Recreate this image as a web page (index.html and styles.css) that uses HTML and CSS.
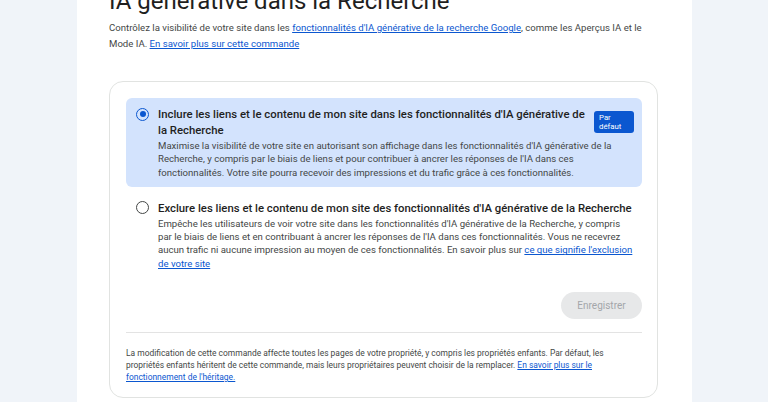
FILE: index.html
```html
<!DOCTYPE html>
<html lang="fr">
<head>
<meta charset="utf-8">
<title>IA générative dans la Recherche</title>
<link rel="stylesheet" href="styles.css">
</head>
<body>
<main class="page">
  <h1 class="title">IA générative dans la Recherche</h1>
  <p class="intro">Contrôlez la visibilité de votre site dans les <a href="#">fonctionnalités d'IA générative de la recherche Google</a>, comme les Aperçus IA et le Mode IA. <a href="#">En savoir plus sur cette commande</a></p>

  <section class="card">
    <div class="option selected">
      <span class="radio on"></span>
      <div class="opt-body">
        <div class="opt-head">
          <div class="opt-title">Inclure les liens et le contenu de mon site dans les fonctionnalités d'IA générative de la Recherche</div>
          <span class="badge">Par<br>défaut</span>
        </div>
        <p class="opt-desc">Maximise la visibilité de votre site en autorisant son affichage dans les fonctionnalités d'IA générative de la Recherche, y compris par le biais de liens et pour contribuer à ancrer les réponses de l'IA dans ces fonctionnalités. Votre site pourra recevoir des impressions et du trafic grâce à ces fonctionnalités.</p>
      </div>
    </div>

    <div class="option">
      <span class="radio"></span>
      <div class="opt-body">
        <div class="opt-title">Exclure les liens et le contenu de mon site des fonctionnalités d'IA générative de la Recherche</div>
        <p class="opt-desc">Empêche les utilisateurs de voir votre site dans les fonctionnalités d'IA générative de la Recherche, y compris par le biais de liens et en contribuant à ancrer les réponses de l'IA dans ces fonctionnalités. Vous ne recevrez aucun trafic ni aucune impression au moyen de ces fonctionnalités. En savoir plus sur <a href="#">ce que signifie l'exclusion de votre site</a></p>
      </div>
    </div>

    <div class="actions">
      <button class="save" type="button" disabled>Enregistrer</button>
    </div>

    <hr class="divider">

    <p class="footnote">La modification de cette commande affecte toutes les pages de votre propriété, y compris les propriétés enfants. Par défaut, les propriétés enfants héritent de cette commande, mais leurs propriétaires peuvent choisir de la remplacer. <a href="#">En savoir plus sur le fonctionnement de l'héritage.</a></p>
  </section>
</main>
</body>
</html>
```

FILE: styles.css
```css
html, body {
  margin: 0;
  padding: 0;
  background: #f0f4f9;
  font-family: Roboto, "Liberation Sans", Arial, sans-serif;
  color: #1f1f1f;
}

.page {
  width: 615px;
  margin-left: 77px;
  background: #ffffff;
  padding: 0 34px 0 32px;
  box-sizing: border-box;
  min-height: 402px;
  overflow: hidden;
}

.title {
  margin: -14px 0 0;
  font-size: 24px;
  line-height: 30px;
  font-weight: 400;
  color: #1f1f1f;
}

.intro {
  margin: 4px 0 0;
  font-size: 9.6px;
  line-height: 16px;
  color: #444746;
  padding-right: 10px;
}

a {
  color: #0b57d0;
  text-decoration: underline;
}

.card {
  margin-top: 29px;
  border: 1px solid #e1e3e1;
  border-radius: 14px;
  padding: 16px 15px 14px 16px;
  box-sizing: border-box;
}

.option {
  display: flex;
  gap: 9px;
  padding: 8px 5px 8px 10px;
  border-radius: 6px;
}

.option + .option {
  margin-top: 5px;
}

.option.selected {
  background: #d3e3fd;
}

.radio {
  flex: none;
  width: 13px;
  height: 13px;
  margin-top: 1.5px;
  border: 1.5px solid #444746;
  border-radius: 50%;
  box-sizing: border-box;
  position: relative;
}

.radio.on {
  border-color: #0b57d0;
}

.radio.on::after {
  content: "";
  position: absolute;
  left: 50%;
  top: 50%;
  width: 6px;
  height: 6px;
  margin: -3px 0 0 -3px;
  background: #0b57d0;
  border-radius: 50%;
}

.opt-body {
  flex: 1;
  min-width: 0;
}

.opt-head {
  display: flex;
  align-items: flex-start;
  gap: 5px;
}

.opt-title {
  font-size: 11.35px;
  line-height: 16px;
  font-weight: 500;
  color: #1f1f1f;
}

.badge {
  flex: none;
  margin: 5px 3px 0 0;
  background: #0b57d0;
  color: #ffffff;
  font-size: 7.8px;
  line-height: 9px;
  padding: 2px 5px;
  border-radius: 3px;
  width: 30px;
}

.opt-desc {
  margin: 1px 0 0;
  font-size: 9.6px;
  line-height: 13.3px;
  color: #444746;
  padding-right: 4px;
}

.actions {
  display: flex;
  justify-content: flex-end;
  margin-top: 14px;
}

.save {
  width: 81px;
  height: 27px;
  border: none;
  border-radius: 14px;
  background: #e7e8e9;
  color: #a3a6aa;
  font-family: inherit;
  font-size: 10px;
}

.divider {
  border: none;
  border-top: 1px solid #e3e3e3;
  margin: 13px 0 0;
}

.footnote {
  margin: 14px 0 0;
  font-size: 8.45px;
  line-height: 12px;
  color: #444746;
  padding-right: 30px;
}
```
